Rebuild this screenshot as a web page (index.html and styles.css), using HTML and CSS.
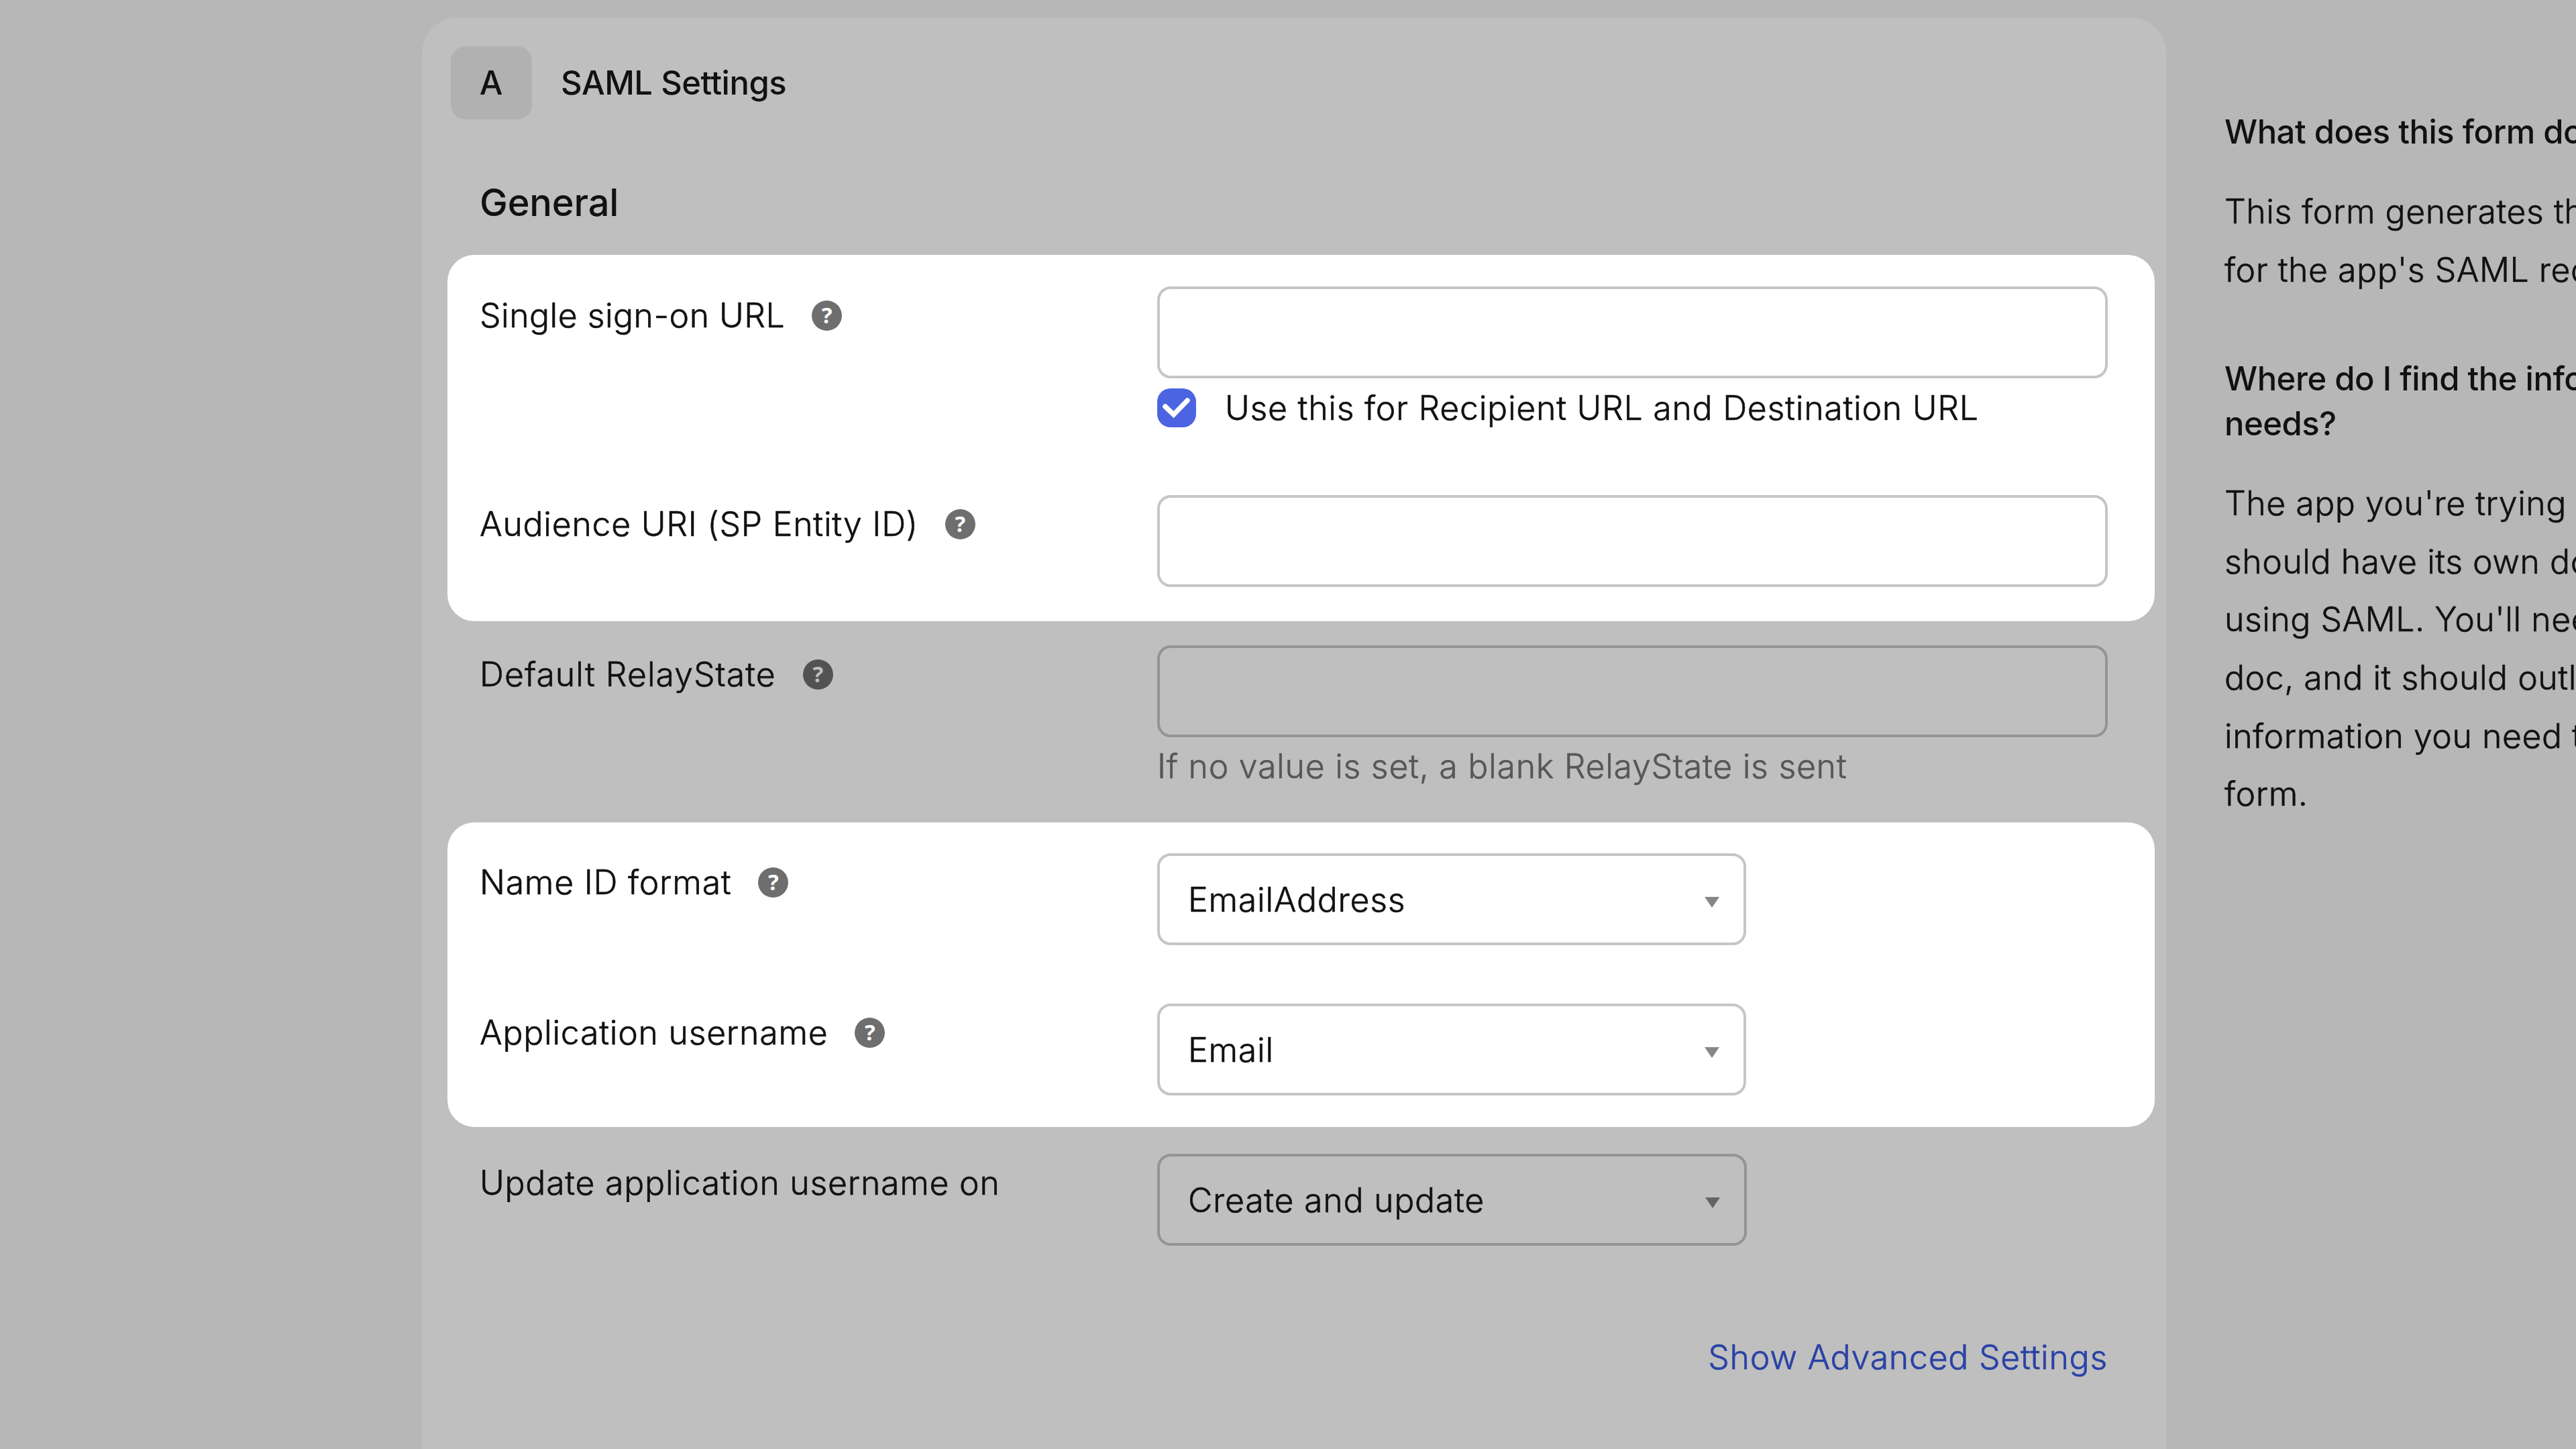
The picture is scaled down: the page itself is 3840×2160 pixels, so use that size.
FILE: index.html
```
<!doctype html>
<html lang="en">

<head>
  <meta charset="UTF-8" />
  <meta name="viewport" content="width=device-width, initial-scale=1.0" />
  <title>SAML Settings</title>
  <link rel="stylesheet" href="styles.css">
</head>

<body>
  <div class="page">
    <main class="card">
      <header class="card-header">
        <span class="step">A</span>
        <h1>SAML Settings</h1>
      </header>

      <h2>General</h2>

      <section class="group highlight">
        <div class="row row-sso">
          <div class="label"><span class="tight">Single sign-on URL</span> <span class="help">?</span></div>
          <div class="control">
            <div class="input"></div>
            <div class="check-row">
              <span class="checkbox">
                <svg viewBox="0 0 58 58" width="58" height="58">
                  <path d="M12 27 L24.5 39 L45 18" fill="none" stroke="#fff" stroke-width="7.5" stroke-linecap="round" />
                </svg>
              </span>
              <span>Use this for Recipient URL and Destination URL</span>
            </div>
          </div>
        </div>
        <div class="row">
          <div class="label"><span>Audience URI (SP Entity ID)</span> <span class="help">?</span></div>
          <div class="control">
            <div class="input"></div>
          </div>
        </div>
      </section>

      <section class="group group-relay dim">
        <div class="row">
          <div class="label"><span class="wide">Default RelayState</span> <span class="help">?</span></div>
          <div class="control">
            <div class="input"></div>
            <p class="hint">If no value is set, a blank RelayState is sent</p>
          </div>
        </div>
      </section>

      <section class="group group-names highlight">
        <div class="row row-format">
          <div class="label"><span>Name ID format</span> <span class="help">?</span></div>
          <div class="control">
            <div class="select"><span>EmailAddress</span><i class="caret"></i></div>
          </div>
        </div>
        <div class="row">
          <div class="label"><span>Application username</span> <span class="help">?</span></div>
          <div class="control">
            <div class="select"><span>Email</span><i class="caret"></i></div>
          </div>
        </div>
      </section>

      <section class="group group-update dim">
        <div class="row">
          <div class="label"><span>Update application username on</span></div>
          <div class="control">
            <div class="select"><span>Create and update</span><i class="caret"></i></div>
          </div>
        </div>
      </section>

      <div class="advanced"><a>Show Advanced Settings</a></div>
    </main>

    <aside class="sidebar">
      <h3>What does this form do?</h3>
      <p>This form generates the XML needed<br>for the app's SAML request.</p>
      <h3>Where do I find the info this form<br>needs?</h3>
      <p>The app you're trying to integrate with<br>should have its own documentation on<br>using SAML. You'll need to find that<br>doc, and it should outline what<br>information you need to specify in this<br>form.</p>
    </aside>
  </div>
</body>

</html>
```
FILE: styles.css
```
* {
  box-sizing: border-box;
}

body,
html {
  margin: 0;
  padding: 0;
  height: 100%;
  overflow: hidden;
  background-color: #b7b7b7;
}

body {
  font-family: Inter, "Liberation Sans", Arial, sans-serif;
  font-size: 50px;
  font-weight: 300;
  line-height: 60px;
  letter-spacing: 0.72px;
  color: #111111;
  -webkit-text-stroke-width: 0.6px;
}

h1,
h2,
h3,
p {
  margin: 0;
}

h1,
h2,
h3,
.step,
.help {
  -webkit-text-stroke-width: 0;
}

.page {
  display: flex;
  height: 2160px;
  padding: 26px 0 0 629px;
}

/* Card */
.card {
  flex: none;
  width: 2600px;
  height: 2200px;
  padding: 43px 17px 0 38px;
  border-radius: 54px 54px 0 0;
  background-color: #bfbfbf;
}

.card-header {
  display: flex;
  align-items: center;
  gap: 43px;
  height: 109px;
  padding-left: 5px;
}

.step {
  display: flex;
  align-items: center;
  justify-content: center;
  width: 121px;
  height: 109px;
  border-radius: 22px;
  background-color: #b1b1b1;
  font-size: 49px;
  font-weight: 500;
}

h1 {
  font-size: 49px;
  font-weight: 500;
  letter-spacing: -0.5px;
}

h2 {
  margin: 90px 0 44px 48px;
  font-size: 56px;
  font-weight: 500;
  line-height: 68px;
  letter-spacing: -0.2px;
}

/* Form groups */
.group {
  padding-left: 49px;
}

.highlight {
  padding-top: 47px;
  border-radius: 40px;
  background-color: #ffffff;
}

.group-relay {
  height: 300px;
  padding-top: 36px;
}

.group.highlight {
  height: 546px;
}

.group-names.highlight {
  height: 454px;
  padding-top: 46px;
}

.group-update {
  height: 178px;
  padding-top: 40px;
}

.row {
  display: grid;
  grid-template-columns: 1009px 1417px;
}

.row-sso {
  height: 311px;
}

.row-format {
  height: 224px;
}

.label {
  display: flex;
  align-items: center;
  gap: 40px;
  height: 60px;
  margin-top: 13px;
  margin-left: -1px;
  white-space: nowrap;
}

.tight {
  letter-spacing: 0.45px;
}

.wide {
  letter-spacing: 1px;
}

.help {
  display: flex;
  align-items: center;
  justify-content: center;
  width: 45px;
  height: 45px;
  border-radius: 50%;
  background-color: #6e6e6e;
  color: #ffffff;
  font-family: "Noto Sans", sans-serif;
  font-size: 33px;
  font-weight: 700;
  letter-spacing: 0;
}

.input,
.select {
  height: 137px;
  border: 4px solid #c6c6c6;
  border-radius: 20px;
}

.select {
  display: flex;
  align-items: center;
  justify-content: space-between;
  width: 878px;
  padding: 0 36px 0 42px;
}

.caret {
  margin-top: 9px;
  border: 11px solid transparent;
  border-top: 16px solid #868686;
  border-bottom: 0;
}

.check-row {
  display: flex;
  align-items: center;
  gap: 43px;
  height: 58px;
  margin-top: 15px;
  white-space: nowrap;
}

.checkbox {
  width: 58px;
  height: 58px;
  border-radius: 20px;
  background-color: #4c64e1;
}

.checkbox svg {
  display: block;
}

.hint {
  margin-top: 13px;
  color: #575757;
}

/* Fields outside the highlighted areas */
.dim .input,
.dim .select {
  border-color: #949494;
}

.dim .select {
  width: 879px;
}

.dim .help {
  background-color: #525252;
  color: #bfbfbf;
}

.dim .caret {
  border-top-color: #646464;
}

.advanced {
  margin-top: 135px;
  padding-right: 70px;
  text-align: right;
}

.advanced a {
  color: #2a42a6;
}

/* Help column */
.sidebar {
  flex: none;
  width: 611px;
  padding: 137px 0 0 87px;
  overflow: hidden;
  white-space: nowrap;
}

h3 {
  font-size: 49px;
  font-weight: 500;
  line-height: 67px;
  letter-spacing: -0.5px;
}

.sidebar p {
  margin: 42px 0 86px;
  line-height: 86.6px;
  letter-spacing: 0.5px;
}
```
